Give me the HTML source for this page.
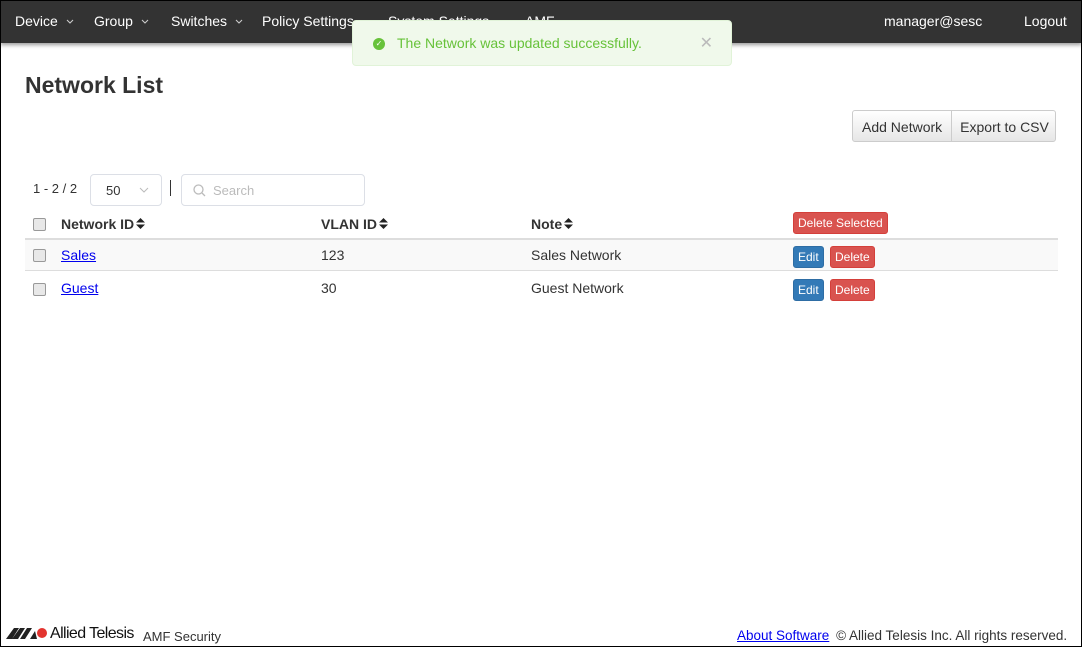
<!DOCTYPE html>
<html><head><meta charset="utf-8"><style>
*{box-sizing:border-box;margin:0;padding:0}
body{width:1082px;height:647px;overflow:hidden;font-family:"Liberation Sans",sans-serif;color:#333;background:#fff;position:relative}
.frame{position:absolute;left:0;top:0;width:1082px;height:647px;border:1px solid #000;pointer-events:none;z-index:10}
.nav{position:absolute;left:0;top:0;width:1082px;height:43px;background:#333;box-shadow:0 2px 4px rgba(0,0,0,.4)}
.nav span{position:absolute;top:13px;color:#fff;font-size:14px;white-space:nowrap}
.car{display:inline-block;margin-left:8px;vertical-align:2px}
.toast{position:absolute;left:352px;top:20px;width:380px;height:46px;background:#f0f9eb;border:1px solid #e1f3d8;border-radius:4px;z-index:5}
.toast .ic{position:absolute;left:20px;top:17px;width:12px;height:12px;border-radius:50%;background:#67c23a;color:#fff;font-size:8px;line-height:12px;text-align:center}
.toast .t{position:absolute;left:44px;top:14px;font-size:14px;color:#67c23a}
.toast .x{position:absolute;right:18px;top:12px;color:#bbb;font-size:16px}
h1{position:absolute;left:25px;top:72px;font-size:23px;font-weight:bold;color:#333}
.bg{position:absolute;left:852px;top:110px;height:32px;display:flex;border:1px solid #ccc;border-radius:3px;background:linear-gradient(#fff,#e6e6e6);font-size:14px}
.bg div{padding:8px 9px 0 9px}
.bg div+div{border-left:1px solid #ccc;padding:8px 6px 0 8px}
.cnt{position:absolute;left:33px;top:181px;font-size:13px}
.sel{position:absolute;left:90px;top:174px;width:72px;height:32px;border:1px solid #dcdfe6;border-radius:4px;font-size:13px;padding:8px 15px}
.sel svg{position:absolute;right:12px;top:12px}
.bar{position:absolute;left:170px;top:180px;width:1px;height:16px;background:#333}
.srch{position:absolute;left:181px;top:174px;width:184px;height:32px;border:1px solid #dcdfe6;border-radius:4px;font-size:13px;color:#bbb;padding:8px 0 0 31px}
.srch svg{position:absolute;left:11px;top:9px}
.cb{position:absolute;left:33px;width:13px;height:13px;border:1px solid #999;border-radius:2px;background:#e8e8e8}
.th{position:absolute;top:216px;font-size:14px;font-weight:bold}
.th svg{margin-left:2px;vertical-align:-1px}
.row{position:absolute;left:25px;width:1033px;height:33px}
.td{position:absolute;font-size:14px}
a{color:#00e;text-decoration:underline}
.btn{position:absolute;color:#fff;font-size:12px;border-radius:3px;height:22px;line-height:21px;padding:0 4px}
.red{background:#d9534f;border:1px solid #d43f3a}
.blue{background:#337ab7;border:1px solid #2e6da4}
.foot{position:absolute;top:628px;font-size:14px;white-space:nowrap}
</style></head><body>
<div class="frame"></div>
<div class="nav">
<span style="left:15px">Device<svg class="car" width="8" height="5" viewBox="0 0 8 5"><path d="M1 1l3 3 3-3" fill="none" stroke="#ccc" stroke-width="1.1"/></svg></span>
<span style="left:94px">Group<svg class="car" width="8" height="5" viewBox="0 0 8 5"><path d="M1 1l3 3 3-3" fill="none" stroke="#ccc" stroke-width="1.1"/></svg></span>
<span style="left:171px">Switches<svg class="car" width="8" height="5" viewBox="0 0 8 5"><path d="M1 1l3 3 3-3" fill="none" stroke="#ccc" stroke-width="1.1"/></svg></span>
<span style="left:262px">Policy Settings</span>
<span style="left:388px">System Settings</span>
<span style="left:525px">AMF</span>
<span style="left:884px">manager@sesc</span>
<span style="left:1024px">Logout</span>
</div>
<div class="toast"><div class="ic">✓</div><div class="t">The Network was updated successfully.</div><div class="x">✕</div></div>
<h1>Network List</h1>
<div class="bg"><div>Add Network</div><div>Export to CSV</div></div>
<div class="cnt">1 - 2 / 2</div>
<div class="sel">50<svg width="10" height="6" viewBox="0 0 10 6"><path d="M1 1l4 4 4-4" fill="none" stroke="#bbb" stroke-width="1"/></svg></div>
<div class="bar"></div>
<div class="srch"><svg width="13" height="13" viewBox="0 0 13 13"><circle cx="5.5" cy="5.5" r="4.5" fill="none" stroke="#bbb" stroke-width="1.3"/><path d="M9 9l3 3" stroke="#bbb" stroke-width="1.3"/></svg>Search</div>
<div class="cb" style="top:218px"></div>
<div class="th" style="left:61px">Network ID<svg width="9" height="13" viewBox="0 0 9 13"><path d="M0 5.5L4.5 1 9 5.5zM0 7.5L4.5 12 9 7.5z" fill="#222"/></svg></div>
<div class="th" style="left:321px">VLAN ID<svg width="9" height="13" viewBox="0 0 9 13"><path d="M0 5.5L4.5 1 9 5.5zM0 7.5L4.5 12 9 7.5z" fill="#222"/></svg></div>
<div class="th" style="left:531px">Note<svg width="9" height="13" viewBox="0 0 9 13"><path d="M0 5.5L4.5 1 9 5.5zM0 7.5L4.5 12 9 7.5z" fill="#222"/></svg></div>
<div class="btn red" style="left:793px;top:212px">Delete Selected</div>
<div class="row" style="top:238px;background:#f9f9f9;border-top:2px solid #ddd;border-bottom:1px solid #ddd"></div>
<div class="cb" style="top:249px"></div>
<div class="td" style="left:61px;top:247px"><a>Sales</a></div>
<div class="td" style="left:321px;top:247px">123</div>
<div class="td" style="left:531px;top:247px">Sales Network</div>
<div class="btn blue" style="left:793px;top:246px">Edit</div>
<div class="btn red" style="left:830px;top:246px">Delete</div>
<div class="cb" style="top:283px"></div>
<div class="td" style="left:61px;top:280px"><a>Guest</a></div>
<div class="td" style="left:321px;top:280px">30</div>
<div class="td" style="left:531px;top:280px">Guest Network</div>
<div class="btn blue" style="left:793px;top:279px">Edit</div>
<div class="btn red" style="left:830px;top:279px">Delete</div>
<svg style="position:absolute;left:6px;top:627px" width="42" height="12" viewBox="0 0 42 12"><path d="M0 12L8 1h5L6 12zM6 12L14 1h5L12 12zM14 12L21 1h5L19 12zM24 12L29 4l2 8z" fill="#222"/><circle cx="36" cy="6" r="5" fill="#e3342f"/></svg>
<div class="foot" style="left:50px;top:625px;font-size:16px;color:#111;letter-spacing:-.6px">Allied Telesis</div>
<div class="foot" style="left:143px;font-size:13px;color:#333;top:629px">AMF Security</div>
<div class="foot" style="left:737px;font-size:13.5px;top:628px"><a>About Software</a> <span style="margin-left:3px">© Allied Telesis Inc. All rights reserved.</span></div>
</body></html>
